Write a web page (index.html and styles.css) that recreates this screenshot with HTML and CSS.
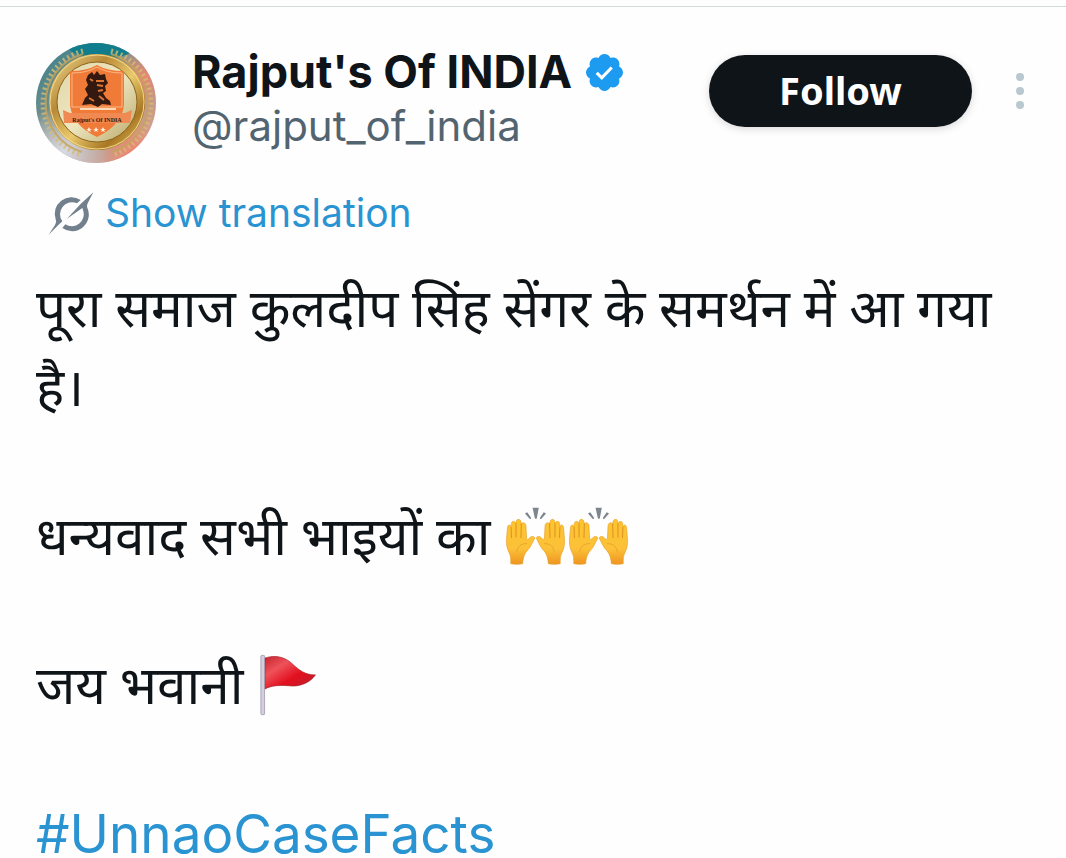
FILE: index.html
```
<!DOCTYPE html>
<html lang="hi">
<head>
    <meta charset="UTF-8">
    <meta name="viewport" content="width=device-width, initial-scale=1.0">
    <title>Rajput's Of INDIA</title>
    <link rel="stylesheet" href="styles.css">
</head>
<body>
    <!-- shared drawings -->
    <svg class="defs" width="0" height="0" aria-hidden="true">
        <defs>
            <linearGradient id="skin" x1="0" y1="0" x2="0" y2="1">
                <stop offset="0" stop-color="#fdc42f"/>
                <stop offset="0.65" stop-color="#fcc138"/>
                <stop offset="1" stop-color="#ee9420"/>
            </linearGradient>
            <g id="hand">
                <path d="M14 213 C14 197 14 190 9 180 C3 168 0 155 1 140 L4 103 C5 94 13 94 14 101 L16 91 C17 82 28 83 29 91 L31 84 C32 76 44 77 45 86 L46 94 C49 86 59 88 60 97 L62 138 C65 140 67 140 70 136 C76 128 85 129 87 135 C83 142 79 152 73 162 C65 174 52 180 50 213 Q32 217 14 213 Z" fill="url(#skin)" stroke="#e8a22a" stroke-width="2"/>
                <path d="M15 103 L16 134 M30 92 L30 132 M46 92 L45 134" fill="none" stroke="#dc9022" stroke-width="3" stroke-linecap="round"/>
                <path d="M32 178 C34 160 44 152 62 152" fill="none" stroke="#eba52c" stroke-width="3" stroke-linecap="round"/>
            </g>
            <symbol id="hands" viewBox="43 32 188 188">
                <use href="#hand" x="48" y="-3"/>
                <use href="#hand" transform="translate(226 -3) scale(-1 1)"/>
                <path d="M128 40 H147 L141 72 Q138 76 135 72 Z M105 58 L112 54 L123 70 Q125 76 119 74 Z M169 58 L162 54 L151 70 Q149 76 155 74 Z" fill="#7d868e"/>
            </symbol>
        </defs>
    </svg>

    <article class="post">
        <header class="post-header">
            <svg class="avatar" viewBox="0 0 120 120" role="img" aria-label="Rajput's Of INDIA">
                <defs>
                    <clipPath id="round"><circle cx="60" cy="60" r="60"/></clipPath>
                    <linearGradient id="backdrop" x1="0" y1="0" x2="1" y2="1">
                        <stop offset="0" stop-color="#2b7e8c"/>
                        <stop offset="0.45" stop-color="#8b938a"/>
                        <stop offset="1" stop-color="#f5a28c"/>
                    </linearGradient>
                    <linearGradient id="gold" x1="0" y1="0" x2="1" y2="1">
                        <stop offset="0" stop-color="#ecd48a"/>
                        <stop offset="0.3" stop-color="#b88a38"/>
                        <stop offset="0.55" stop-color="#e9c96c"/>
                        <stop offset="0.8" stop-color="#a87724"/>
                        <stop offset="1" stop-color="#e6bf5e"/>
                    </linearGradient>
                    <linearGradient id="face" x1="0" y1="0" x2="1" y2="1">
                        <stop offset="0" stop-color="#e0d6a8"/>
                        <stop offset="0.5" stop-color="#efe6c0"/>
                        <stop offset="1" stop-color="#b8a868"/>
                    </linearGradient>
                    <radialGradient id="haze">
                        <stop offset="0" stop-color="#d8dbe6"/>
                        <stop offset="1" stop-color="#d8dbe6" stop-opacity="0"/>
                    </radialGradient>
                    <radialGradient id="coral">
                        <stop offset="0" stop-color="#ec8672"/>
                        <stop offset="1" stop-color="#ec8672" stop-opacity="0"/>
                    </radialGradient>
                </defs>
                <g clip-path="url(#round)">
                    <rect width="120" height="120" fill="url(#backdrop)"/>
                    <ellipse cx="66" cy="0" rx="36" ry="16" fill="#107d8c"/>
                    <circle cx="28" cy="108" r="46" fill="url(#haze)"/>
                    <circle cx="108" cy="34" r="30" fill="url(#coral)"/>
                    <circle cx="96" cy="108" r="30" fill="url(#coral)"/>
                    <!-- laurel -->
                    <path d="M47 8 A54 54 0 0 0 46 112 M75 8 A54 54 0 0 1 76 112" fill="none" stroke="#d6bb74" stroke-width="5" stroke-dasharray="2 3" opacity="0.8"/>
                    <path d="M47 11 A51 51 0 0 0 46 109 M75 11 A51 51 0 0 1 76 109" fill="none" stroke="#c4a35a" stroke-width="2" opacity="0.8"/>
                    <circle cx="61" cy="59" r="48" fill="#b98a34"/>
                    <circle cx="61" cy="59" r="44" fill="none" stroke="url(#gold)" stroke-width="8"/>
                    <circle cx="61" cy="59" r="47" fill="none" stroke="#f0d88c" stroke-width="1"/>
                    <circle cx="61" cy="59" r="40" fill="url(#face)" stroke="#8c641f" stroke-width="1"/>
                    <path d="M61 22 Q71 28 88 28 V62 Q86 82 61 94 Q36 82 34 62 V28 Q51 28 61 22 Z" fill="#f07a38"/>
                    <path d="M61 24 Q71 30 86 30 V64 H36 V30 Q51 30 61 24 Z" fill="none" stroke="#fbb886" stroke-width="1"/>
                    <!-- portrait -->
                    <path d="M52 32 L56 29 L58 32 L61 28 L64 32 L69 31 L70 36 L72 40 L69 43 L70 48 L67 50 L70 55 L74 58 L75 62 L66 61 L62 64 L55 61 L46 62 L49 55 L52 52 L49 46 L52 42 L50 37 Z" fill="#33190f"/>
                    <path d="M60 38 h8 M61 42 l6 1 M62 48 l5 -1 M63 53 l5 4 M53 55 l5 3 M54 36 l3 2" fill="none" stroke="#dc7434" stroke-width="2"/>
                    <path d="M44 66 H80" stroke="#fbd9b4" stroke-width="2"/>
                    <path d="M27 67 L34 70 H89 L96 67 L94 80 H28 Z" fill="#f08a52"/>
                    <text class="avatar-name" x="61" y="79" text-anchor="middle">Rajput's Of INDIA</text>
                    <path d="M53 84 l1 2 h2 l-2 1 l1 2 l-2 -1 l-2 1 l1 -2 l-2 -1 h2 Z M60 84 l1 2 h2 l-2 1 l1 2 l-2 -1 l-2 1 l1 -2 l-2 -1 h2 Z M67 84 l1 2 h2 l-2 1 l1 2 l-2 -1 l-2 1 l1 -2 l-2 -1 h2 Z" fill="#fff3df"/>
                </g>
            </svg>

            <div class="author">
                <div class="author-name">
                    <span>Rajput's Of INDIA</span>
                    <svg class="verified" viewBox="1.75 1.75 20.5 20.5" role="img" aria-label="Verified">
                        <path d="M22.25 12c0-1.43-.88-2.67-2.19-3.34.46-1.39.2-2.9-.81-3.91s-2.52-1.27-3.91-.81c-.66-1.31-1.91-2.19-3.34-2.19s-2.67.88-3.33 2.19c-1.4-.46-2.91-.2-3.92.81s-1.26 2.52-.8 3.91c-1.31.67-2.2 1.91-2.2 3.34s.89 2.67 2.2 3.34c-.46 1.39-.21 2.9.8 3.91s2.52 1.26 3.91.81c.67 1.31 1.91 2.19 3.34 2.19s2.68-.88 3.34-2.19c1.39.45 2.9.2 3.91-.81s1.27-2.52.81-3.91c1.31-.67 2.19-1.91 2.19-3.34z" fill="#1d9bf0"/>
                        <path d="M7.7 12.2 L10.5 15 L16 9.2" fill="none" stroke="#fff" stroke-width="1.7"/>
                    </svg>
                </div>
                <div class="author-handle">@rajput_of_india</div>
            </div>

            <div class="actions">
                <button class="follow-btn" type="button">Follow</button>
                <button class="more-btn" type="button" aria-label="More">
                    <svg viewBox="0 0 8 36" width="8" height="36">
                        <circle cx="4" cy="4" r="4"/>
                        <circle cx="4" cy="18" r="4"/>
                        <circle cx="4" cy="32" r="4"/>
                    </svg>
                </button>
            </div>
        </header>

        <a class="translate" href="#">
            <svg class="translate-icon" viewBox="35 36 138 129" aria-hidden="true">
                <path d="M133 60 A50 50 0 0 0 58 118 Q62 126 56 135 L37 164 L66 135 L78 124 A36 36 0 0 1 122 70 Z"/>
                <path d="M171 37 L156 66 Q150 76 153 83 A50 50 0 0 1 78 144 L87 133 A36 36 0 0 0 140 90 L138 84 L92 116 L132 73 Z"/>
            </svg>
            <span>Show translation</span>
        </a>

        <div class="post-text">
            <p>पूरा समाज कुलदीप सिंह सेंगर के समर्थन में आ गया है।</p>
            <p>धन्यवाद सभी भाइयों का <svg class="emoji" role="img" aria-label="Raised hands"><use href="#hands"/></svg><svg class="emoji" role="img" aria-label="Raised hands"><use href="#hands"/></svg></p>
            <p>जय भवानी <svg class="emoji" viewBox="56 44 184 184" role="img" aria-label="Red flag">
                <defs>
                    <linearGradient id="cloth" x1="0" y1="0" x2="1" y2="1">
                        <stop offset="0" stop-color="#c5222c"/>
                        <stop offset="0.3" stop-color="#ee525a"/>
                        <stop offset="0.6" stop-color="#e3101f"/>
                        <stop offset="1" stop-color="#b8202c"/>
                    </linearGradient>
                </defs>
                <path d="M78 56 C108 46 136 52 158 72 C180 92 196 106 228 106 C214 126 188 140 158 139 C128 136 98 136 78 148 Z" fill="url(#cloth)" stroke="#a72631" stroke-width="2"/>
                <rect x="66" y="48" width="11" height="176" rx="3" fill="#d5cede" stroke="#92899f" stroke-width="2"/>
            </svg></p>
            <p><a class="hashtag" href="#">#UnnaoCaseFacts</a></p>
        </div>
    </article>
</body>
</html>
```
FILE: styles.css
```
* {
    margin: 0;
    padding: 0;
    box-sizing: border-box;
}

body {
    font-family: Inter, "Noto Sans", sans-serif;
    background: #fefefe;
    color: #0f1419;
}

a {
    color: #2a93d1;
    text-decoration: none;
}

button {
    border: none;
    background: none;
    cursor: pointer;
}

.defs {
    position: absolute;
}

.post {
    margin-top: 6px;
    padding: 36px 36px 0;
    border-top: 1px solid #d3dadc;
}

.post-header {
    display: flex;
    align-items: flex-start;
}

.avatar {
    width: 120px;
    height: 120px;
    flex-shrink: 0;
}

.avatar-name {
    font-family: "Liberation Serif", serif;
    font-size: 6px;
    font-weight: bold;
    fill: #3a1708;
}

.author {
    margin-left: 36px;
    padding-top: 2px;
}

.author-name {
    display: flex;
    align-items: center;
    gap: 14px;
    font-size: 45px;
    font-weight: 700;
    line-height: 54px;
    white-space: nowrap;
}

.verified {
    width: 37px;
    height: 37px;
}

.author-handle {
    color: #536471;
    font-size: 42px;
    line-height: 54px;
}

.actions {
    display: flex;
    align-items: center;
    gap: 38px;
    margin-left: auto;
    padding-top: 12px;
}

.follow-btn {
    width: 263px;
    height: 72px;
    padding-bottom: 2px;
    border-radius: 36px;
    background: #0f1419;
    box-shadow: 0 2px 8px rgba(0, 0, 0, 0.15);
    color: #fff;
    font-family: "Noto Sans", sans-serif;
    font-size: 38px;
    font-weight: 700;
}

.more-btn {
    display: flex;
    padding: 10px 6px;
    fill: #b9c7cf;
}

.translate {
    display: flex;
    align-items: center;
    gap: 11px;
    width: fit-content;
    margin-top: 24px;
    padding-left: 12px;
    font-size: 39px;
    line-height: 52px;
}

.translate-icon {
    width: 46px;
    height: 43px;
    fill: #71808c;
}

.post-text {
    margin-top: 28px;
    font-family: "Noto Sans", sans-serif;
    font-size: 53px;
    line-height: 79px;
}

.post-text p {
    margin-bottom: 70px;
}

.post-text p:last-child {
    margin-bottom: 0;
}

.hashtag {
    font-family: Inter, sans-serif;
}

.emoji {
    width: 63px;
    height: 62px;
    vertical-align: -12px;
}
```
